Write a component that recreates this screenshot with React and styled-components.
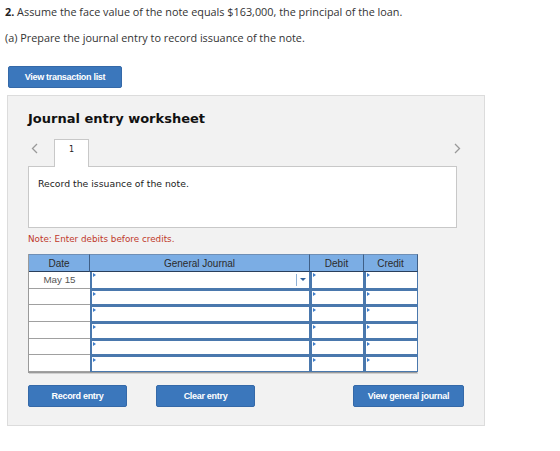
import styled, { createGlobalStyle } from "styled-components";

const GlobalStyle = createGlobalStyle`
  *, *::before, *::after {
    box-sizing: border-box;
  }
  body {
    margin: 0;
    background: #fff;
    font-family: "Liberation Sans", Arial, sans-serif;
  }
`;

const Page = styled.div`
  padding: 5px 5px 0 5px;
`;

const Question = styled.p`
  margin: 0;
  font-family: "Open Sans", "Liberation Sans", sans-serif;
  font-size: 10.85px;
  color: #333;
  line-height: 14px;
  b {
    font-weight: bold;
    color: #222;
  }
`;

const Part = styled(Question)`
  margin-top: 12px;
`;

const BlueButton = styled.button`
  height: 22px;
  width: ${(p) => p.$width}px;
  margin-right: ${(p) => p.$pullRight || 0}px;
  border: 1px solid #3569a8;
  border-radius: 2px;
  background: #3b77bc;
  color: #fff;
  font-family: "Liberation Sans", Arial, sans-serif;
  font-weight: bold;
  font-size: 9px;
  letter-spacing: -0.3px;
  padding: 0;
  cursor: pointer;
`;

const TopButton = styled(BlueButton)`
  margin: 21px 0 0 3px;
  display: block;
`;

const Panel = styled.section`
  margin: 7px 0 0 2px;
  width: 478px;
  padding: 15px 27px 17px 20px;
  background: #f2f2f2;
  border: 1px solid #dcdcdc;
`;

const Title = styled.h2`
  margin: 0;
  font-family: "DejaVu Sans", Verdana, sans-serif;
  font-size: 13px;
  font-weight: bold;
  color: #111;
  line-height: 16px;
`;

const TabRow = styled.div`
  display: flex;
  align-items: flex-end;
  margin-top: 11px;
  height: 28px;
`;

const Chevron = styled.span`
  width: ${(p) => p.$slot}px;
  align-self: center;
  display: flex;
  justify-content: ${(p) => (p.$right ? "flex-end" : "flex-start")};
  padding-left: ${(p) => (p.$right ? 0 : 3)}px;
  margin-left: ${(p) => (p.$right ? "auto" : "0")};
  margin-right: ${(p) => (p.$right ? -4 : 0)}px;
  margin-top: -8px;
`;

const Tab = styled.div`
  width: 35px;
  height: 28px;
  background: #fff;
  border: 1px solid #c8c8c8;
  border-bottom: none;
  margin-bottom: -1px;
  position: relative;
  z-index: 1;
  font-family: "DejaVu Sans", Verdana, sans-serif;
  font-size: 8px;
  color: #222;
  text-align: center;
  line-height: 20px;
`;

const ContentBox = styled.div`
  height: 62px;
  background: #fff;
  border: 1px solid #c8c8c8;
  padding: 11px 9px 0;
  font-family: "DejaVu Sans", Verdana, sans-serif;
  font-size: 9.3px;
  color: #222;
`;

const Note = styled.p`
  margin: 5px 0 0;
  font-family: "DejaVu Sans", Verdana, sans-serif;
  font-size: 8.8px;
  color: #c0392b;
  line-height: 12px;
`;

const Grid = styled.div`
  margin-top: 9px;
  display: grid;
  grid-template-columns: 61px 220px 54px 54px;
  grid-auto-rows: 16.7px;
  grid-template-rows: 18px;
  width: 389px;
  border-left: 1px solid #9a9a9a;
  border-bottom: 1px solid #9a9a9a;
  box-shadow: 1px 1px 0 #d0d0d0;
`;

const HeadCell = styled.div`
  background: #7badE4;
  color: #2b2b2b;
  font-size: 10px;
  text-align: center;
  line-height: 17px;
  border-top: 1px solid #6f8fb5;
  border-right: 1px solid #3f5f86;
  border-bottom: 1px solid #2a3f5c;
`;

const DateCell = styled.div`
  background: #fff;
  color: #555;
  font-size: 9.8px;
  text-align: center;
  line-height: 15px;
  border-bottom: 1px solid #a0a0a0;
`;

const InputCell = styled.div`
  position: relative;
  background: #fff;
  border: solid #4a78ad;
  border-width: ${(p) => (p.$first ? "0 1px 1px 2px" : "2px 1px 1px 2px")};

  &::before {
    content: "";
    position: absolute;
    left: 1px;
    top: 1px;
    border-top: 2px solid transparent;
    border-bottom: 2px solid transparent;
    border-left: 3px solid #3d7cc9;
  }
`;

const Dropdown = styled.span`
  position: absolute;
  right: 0;
  top: 2px;
  bottom: 2px;
  width: 13px;
  border-left: 1px solid #8eb0d6;
  display: flex;
  align-items: center;
  justify-content: center;

  &::after {
    content: "";
    border-left: 3px solid transparent;
    border-right: 3px solid transparent;
    border-top: 3px solid #2d5f9a;
  }
`;

const ButtonRow = styled.div`
  display: flex;
  align-items: center;
  margin-top: 12px;
  margin-bottom: 1px;
  gap: 29px;
`;

const Spacer = styled.div`
  flex: 1;
`;

function ChevronIcon({ dir }) {
  return (
    <svg width="7" height="11" viewBox="0 0 7 11">
      <path
        d={dir === "left" ? "M6 1 L1.5 5.5 L6 10" : "M1 1 L5.5 5.5 L1 10"}
        fill="none"
        stroke="#999"
        strokeWidth="1.3"
      />
    </svg>
  );
}

const rows = ["May 15", "", "", "", "", ""];

export default function App() {
  return (
    <>
      <GlobalStyle />
      <Page>
        <Question>
          <b>2.</b> Assume the face value of the note equals $163,000, the principal of the loan.
        </Question>
        <Part>(a) Prepare the journal entry to record issuance of the note.</Part>
        <TopButton $width={114}>View transaction list</TopButton>

        <Panel>
          <Title>Journal entry worksheet</Title>
          <TabRow>
            <Chevron $slot={26}>
              <ChevronIcon dir="left" />
            </Chevron>
            <Tab>1</Tab>
            <Chevron $slot={20} $right>
              <ChevronIcon dir="right" />
            </Chevron>
          </TabRow>
          <ContentBox>Record the issuance of the note.</ContentBox>
          <Note>Note: Enter debits before credits.</Note>

          <Grid>
            <HeadCell>Date</HeadCell>
            <HeadCell>General Journal</HeadCell>
            <HeadCell>Debit</HeadCell>
            <HeadCell>Credit</HeadCell>
            {rows.map((date, i) => [
              <DateCell key={`d${i}`}>{date}</DateCell>,
              <InputCell key={`g${i}`} $first={i === 0}>
                {i === 0 && <Dropdown />}
              </InputCell>,
              <InputCell key={`dr${i}`} $first={i === 0} />,
              <InputCell key={`cr${i}`} $first={i === 0} />,
            ])}
          </Grid>

          <ButtonRow>
            <BlueButton $width={99}>Record entry</BlueButton>
            <BlueButton $width={99}>Clear entry</BlueButton>
            <Spacer />
            <BlueButton $width={111} $pullRight={-7}>
              View general journal
            </BlueButton>
          </ButtonRow>
        </Panel>
      </Page>
    </>
  );
}
